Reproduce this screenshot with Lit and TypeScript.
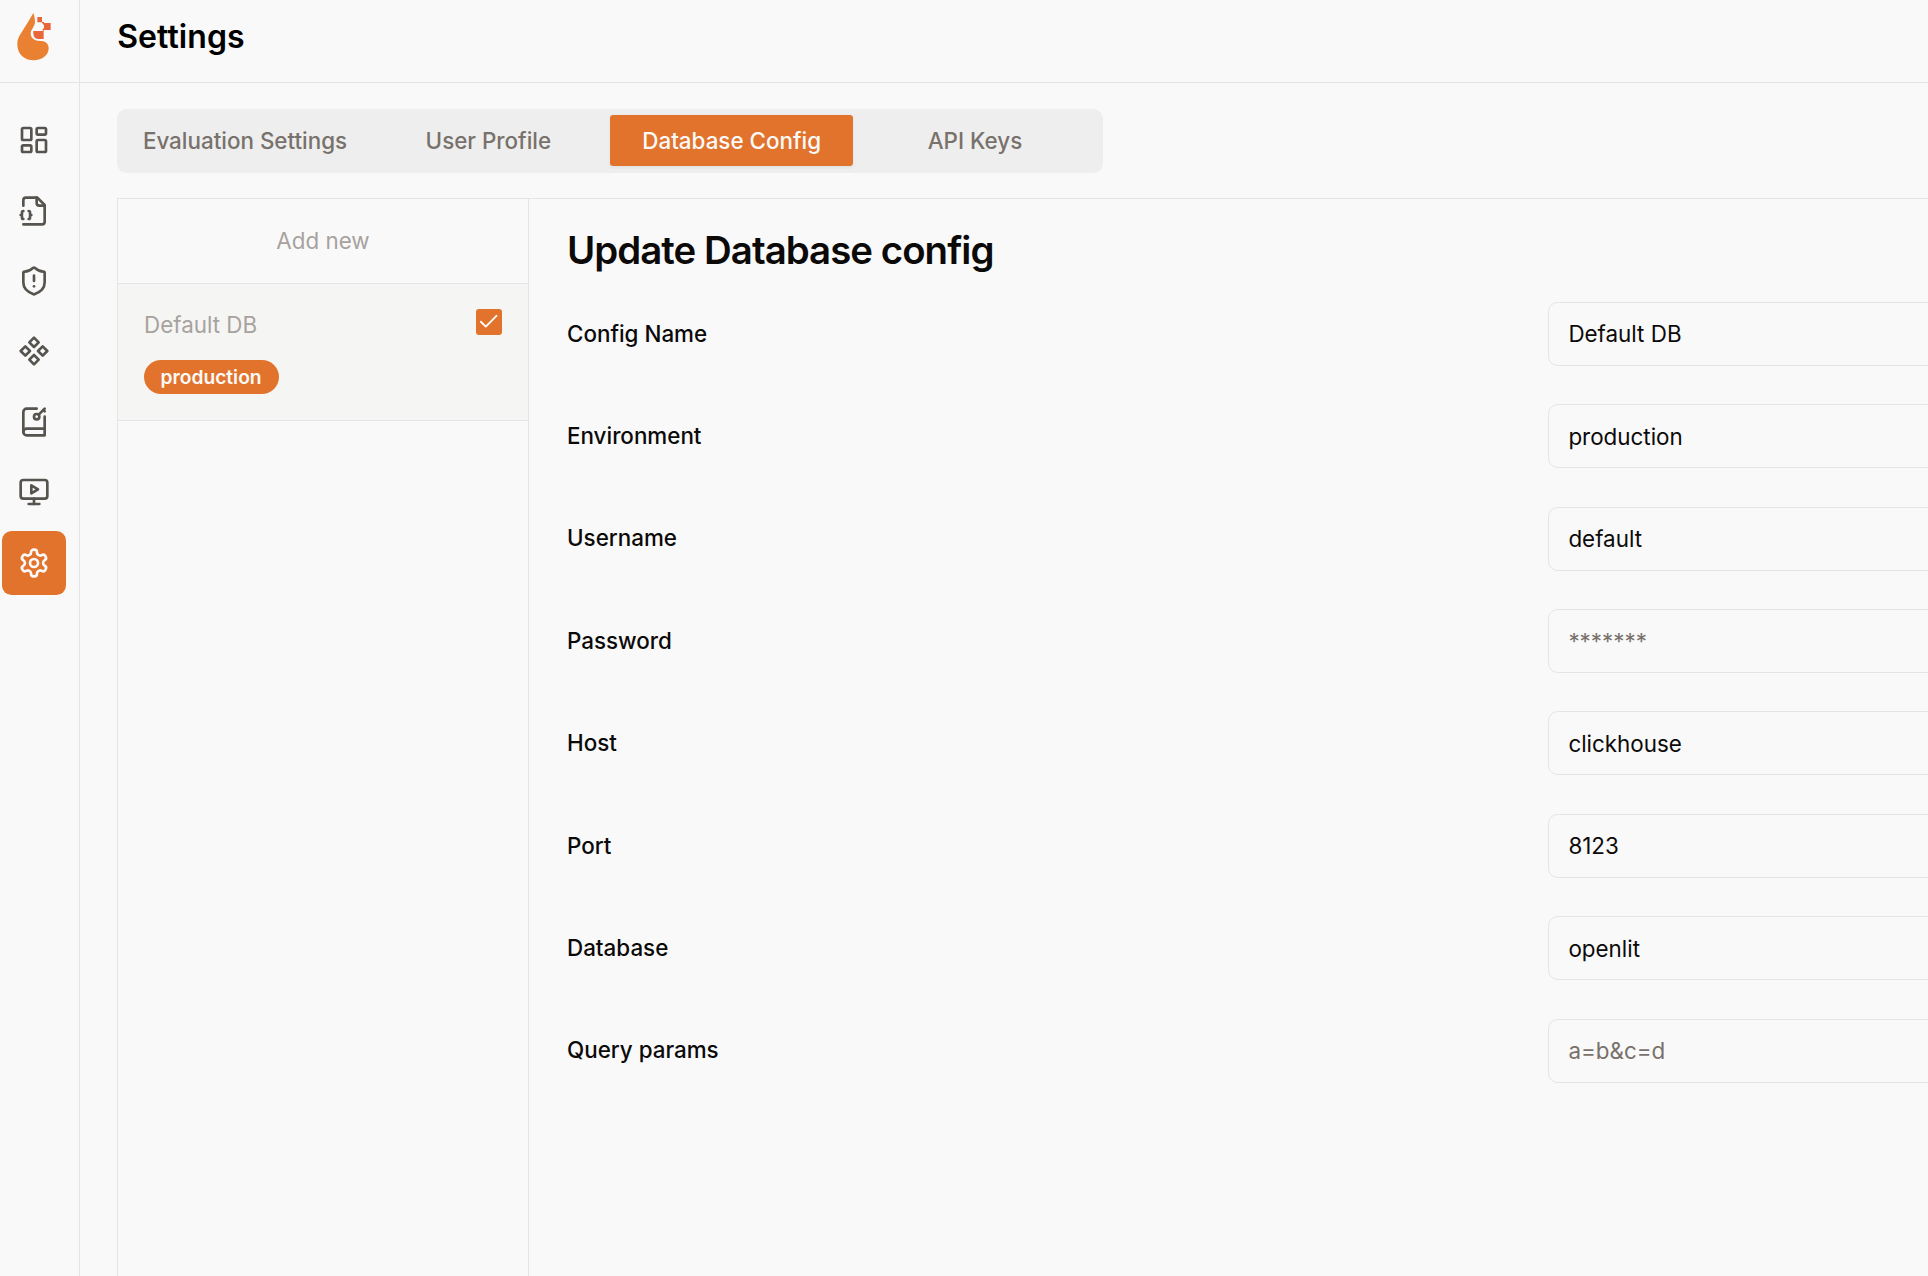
import { LitElement, html, svg, css } from "lit";
import { customElement } from "lit/decorators.js";
import { classMap } from "lit/directives/class-map.js";

const icons = {
  dashboard: svg`<rect width="7" height="9" x="3" y="3" rx="1"/><rect width="7" height="5" x="14" y="3" rx="1"/><rect width="7" height="9" x="14" y="12" rx="1"/><rect width="7" height="5" x="3" y="16" rx="1"/>`,
  fileJson: svg`<path d="M4 22h14a2 2 0 0 0 2-2V7.5L14.5 2H6a2 2 0 0 0-2 2v4"/><path d="M14 2v4a2 2 0 0 0 2 2h4"/><path d="M4 12a1 1 0 0 0-1 1v1a1 1 0 0 1-1 1 1 1 0 0 1 1 1v1a1 1 0 0 0 1 1"/><path d="M8 18a1 1 0 0 0 1-1v-1a1 1 0 0 1 1-1 1 1 0 0 1-1-1v-1a1 1 0 0 0-1-1"/>`,
  shield: svg`<path d="M20 13c0 5-3.5 7.5-7.66 8.95a1 1 0 0 1-.67-.01C7.5 20.5 4 18 4 13V6a1 1 0 0 1 1-1c2 0 4.5-1.2 6.24-2.72a1.17 1.17 0 0 1 1.52 0C14.51 3.81 17 5 19 5a1 1 0 0 1 1 1z"/><path d="M12 8v4"/><path d="M12 16h.01"/>`,
  component: svg`<path d="M5.5 8.5 9 12l-3.5 3.5L2 12l3.5-3.5Z"/><path d="m12 2 3.5 3.5L12 9 8.5 5.5 12 2Z"/><path d="M18.5 8.5 22 12l-3.5 3.5L15 12l3.5-3.5Z"/><path d="m12 15 3.5 3.5L12 22l-3.5-3.5L12 15Z"/>`,
  bookKey: svg`<path d="M4 19.5v-15A2.5 2.5 0 0 1 6.5 2H14"/><path d="M20 8v14H6.5a2.5 2.5 0 0 1 0-5H20"/><circle cx="14" cy="8" r="2"/><path d="m20 2-4.5 4.5"/><path d="m19 3 1 1"/>`,
  monitorPlay: svg`<path d="m10 7 5 3-5 3Z"/><rect width="20" height="14" x="2" y="3" rx="2"/><path d="M12 17v4"/><path d="M8 21h8"/>`,
  settings: svg`<path d="M12.22 2h-.44a2 2 0 0 0-2 2v.18a2 2 0 0 1-1 1.73l-.43.25a2 2 0 0 1-2 0l-.15-.08a2 2 0 0 0-2.73.73l-.22.38a2 2 0 0 0 .73 2.73l.15.1a2 2 0 0 1 1 1.72v.51a2 2 0 0 1-1 1.74l-.15.09a2 2 0 0 0-.73 2.73l.22.38a2 2 0 0 0 2.73.73l.15-.08a2 2 0 0 1 2 0l.43.25a2 2 0 0 1 1 1.73V20a2 2 0 0 0 2 2h.44a2 2 0 0 0 2-2v-.18a2 2 0 0 1 1-1.73l.43-.25a2 2 0 0 1 2 0l.15.08a2 2 0 0 0 2.73-.73l.22-.39a2 2 0 0 0-.73-2.73l-.15-.08a2 2 0 0 1-1-1.74v-.5a2 2 0 0 1 1-1.74l.15-.09a2 2 0 0 0 .73-2.73l-.22-.38a2 2 0 0 0-2.73-.73l-.15.08a2 2 0 0 1-2 0l-.43-.25a2 2 0 0 1-1-1.73V4a2 2 0 0 0-2-2z"/><circle cx="12" cy="12" r="3"/>`,
  check: svg`<path d="M20 6 9 17l-5-5"/>`,
};

const nav: { icon: keyof typeof icons; label: string; active?: boolean }[] = [
  { icon: "dashboard", label: "Dashboard" },
  { icon: "fileJson", label: "Requests" },
  { icon: "shield", label: "Exceptions" },
  { icon: "component", label: "Prompt Hub" },
  { icon: "bookKey", label: "Vault" },
  { icon: "monitorPlay", label: "Openground" },
  { icon: "settings", label: "Settings", active: true },
];

const tabs = ["Evaluation Settings", "User Profile", "Database Config", "API Keys"];
const activeTab = "Database Config";

const fields = [
  { label: "Config Name", value: "Default DB", placeholder: "" },
  { label: "Environment", value: "production", placeholder: "" },
  { label: "Username", value: "default", placeholder: "" },
  { label: "Password", value: "", placeholder: "*******" },
  { label: "Host", value: "clickhouse", placeholder: "" },
  { label: "Port", value: "8123", placeholder: "" },
  { label: "Database", value: "openlit", placeholder: "" },
  { label: "Query params", value: "", placeholder: "a=b&c=d" },
];

@customElement("app-root")
export class AppRoot extends LitElement {
  static styles = css`
    :host {
      display: flex;
      height: 1276px;
      overflow: hidden;
      background: #f9f9f9;
      color: #0c0a09;
      font-family: Inter, "Liberation Sans", sans-serif;
      font-size: 22.4px;
      line-height: 32px;
      --orange: #e2732d;
      --line: #e5e5e8;
    }
    * { box-sizing: border-box; }
    button { font: inherit; border: 0; background: none; padding: 0; color: inherit; }
    .icon { fill: none; stroke: currentColor; stroke-width: 2; stroke-linecap: round; stroke-linejoin: round; display: block; }
    .side { flex: none; width: 80px; border-right: 1px solid var(--line); }
    .brand { height: 83px; border-bottom: 1px solid var(--line); padding: 10px 0 0 13px; }
    .logo { display: block; width: 40px; height: 54px; }
    .nav { display: flex; flex-direction: column; gap: 6.4px; padding: 25.2px 0 0 2px; }
    .nav-item { width: 64px; height: 64px; border-radius: 9.6px; display: grid; place-items: center; color: #57534e; }
    .nav-item.active { background: var(--orange); color: #fafafa; }
    .nav-item .icon { width: 32px; height: 32px; }
    .main { flex: 1; min-width: 0; display: flex; flex-direction: column; }
    .header { height: 83px; flex: none; border-bottom: 1px solid var(--line); padding: 14px 0 0 37.2px; }
    .heading { margin: 0; font-size: 32px; line-height: 45px; font-weight: 600; color: #000; letter-spacing: 0.08px; }
    .content { flex: 1; display: flex; flex-direction: column; align-items: stretch; gap: 25.4px; padding: 26px 0 0 37px; }
    .tabs { flex: none; width: 986px; height: 64px; padding: 6.2px 6.4px; border-radius: 9.6px; background: #eeeeee; display: grid; grid-template-columns: repeat(4, 1fr); }
    .tab { height: 51.2px; border-radius: 3.2px; color: #78716c; font-weight: 500; white-space: nowrap; }
    .tab.active { background: var(--orange); color: #fafaf9; box-shadow: 0 1.6px 3.2px rgba(0, 0, 0, 0.05); }
    .panel { flex: 1; display: flex; border-top: 1px solid var(--line); border-left: 1px solid var(--line); }
    .list { width: 411px; flex: none; border-right: 1px solid var(--line); }
    .add { display: block; width: 100%; height: 85px; border-bottom: 1px solid var(--line); color: #a8a29e; }
    .entry { height: 137px; border-bottom: 1px solid var(--line); background: #f5f5f4; display: flex; justify-content: space-between; align-items: flex-start; padding: 24.6px 26px 0; color: #a8a29e; }
    .entry-info { display: flex; flex-direction: column; align-items: flex-start; gap: 19.4px; }
    .badge { height: 34px; border-radius: 17px; padding: 0 17.2px 0 16.6px; background: var(--orange); color: #fafaf9; font-size: 19.2px; font-weight: 600; line-height: 35px; }
    .box { width: 26px; height: 26px; border-radius: 3px; background: var(--orange); color: #fafaf9; display: grid; place-items: center; }
    .box .icon { width: 23.4px; height: 23.4px; }
    .form { flex: 1; min-width: 0; padding: 25px 0 0 38px; }
    .title { margin: 0 0 25.45px; font-size: 38.4px; line-height: 52px; font-weight: 600; letter-spacing: -0.96px; }
    .fields { display: flex; flex-direction: column; gap: 38.4px; }
    .field { display: grid; grid-template-columns: 981px 1fr; align-items: start; height: 64px; }
    .label { font-weight: 500; padding-top: 15.82px; }
    .input { width: 460px; height: 64px; border: 1px solid #e5e5e5; border-radius: 9.6px; padding: 0 19.4px; background: transparent; color: inherit; font: inherit; outline: none; }
    .input::placeholder { color: #78716c; opacity: 1; }
  `;

  private icon(name: keyof typeof icons) {
    return html`<svg class="icon" viewBox="0 0 24 24" aria-hidden="true">${icons[name]}</svg>`;
  }

  private logo() {
    return html`<svg class="logo" viewBox="39 30 120 162" aria-hidden="true">
      <path fill="#ea8132" d="M100 39C96 46 91 54 86 63L58 108C53 117 52 125 52 134C52 161 73 181 101 181C127 181 146 165 146 145C146 131 137 123 121 123C103 123 92 114 92 100C92 88 105 80 105 65C105 54 102 46 100 39Z"/>
      <path fill="#e9663a" d="M112 51H126V66H132V69H152V90H131V117H116C107 117 101 112 100 101V93H128V88L132 84V76L125 67H112Z"/>
    </svg>`;
  }

  render() {
    return html`
      <aside class="side">
        <div class="brand">${this.logo()}</div>
        <nav class="nav">
          ${nav.map((n) => html`<button class=${classMap({ "nav-item": true, active: !!n.active })} aria-label=${n.label}>${this.icon(n.icon)}</button>`)}
        </nav>
      </aside>
      <main class="main">
        <header class="header"><h1 class="heading">Settings</h1></header>
        <div class="content">
          <div class="tabs">
            ${tabs.map((t) => html`<button class=${classMap({ tab: true, active: t === activeTab })}>${t}</button>`)}
          </div>
          <section class="panel">
            <div class="list">
              <button class="add">Add new</button>
              <div class="entry">
                <div class="entry-info"><span>Default DB</span><span class="badge">production</span></div>
                <span class="box">${this.icon("check")}</span>
              </div>
            </div>
            <form class="form">
              <h2 class="title">Update Database config</h2>
              <div class="fields">
                ${fields.map((f) => html`<div class="field">
                  <label class="label">${f.label}</label>
                  <input class="input" .value=${f.value} placeholder=${f.placeholder} aria-label=${f.label} />
                </div>`)}
              </div>
            </form>
          </section>
        </div>
      </main>
    `;
  }
}
